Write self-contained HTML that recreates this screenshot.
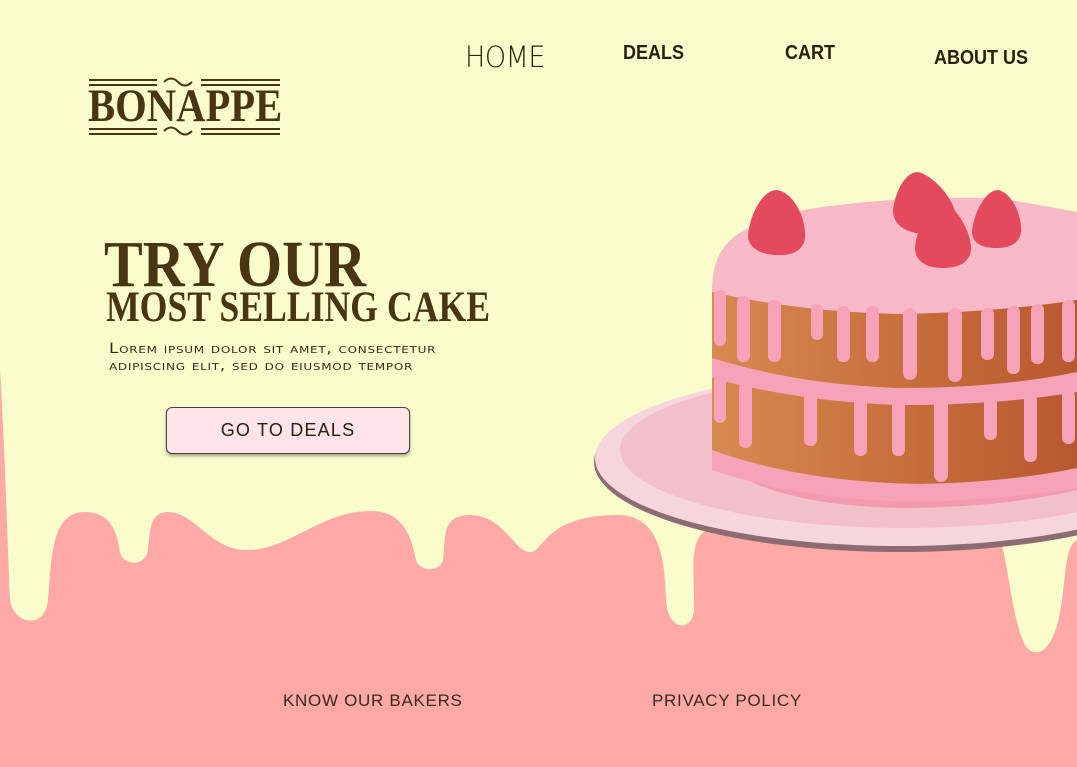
<!DOCTYPE html>
<html><head><meta charset="utf-8"><style>
*{margin:0;padding:0;box-sizing:border-box}
body{width:1077px;height:767px;overflow:hidden;background:#f9fdcc;position:relative;font-family:"Liberation Sans",sans-serif;color:#2a200f}
.a{position:absolute;white-space:nowrap}
.nav{font-family:"Liberation Sans",sans-serif;transform-origin:0 0}
.t{font-family:"Liberation Serif",serif;font-weight:bold;color:#4a3513;transform-origin:0 0}
</style></head><body>
<svg class="a" style="left:0;top:0" width="1077" height="767" viewBox="0 0 1077 767">
<defs>
<linearGradient id="sp" x1="0" x2="1"><stop offset="0" stop-color="#d88a50"/><stop offset="0.5" stop-color="#c8703e"/><stop offset="1" stop-color="#b8582e"/></linearGradient>
</defs>
<path fill="#fda9a7" d="M0,370 C5,450 8,560 10,600 C14,625 45,630 48,600 C52,560 50,512 85,512 C115,512 118,540 120,552 C122,565 145,568 148,550 C150,530 150,512 168,512 C195,512 210,550 247,550 C290,550 320,511 371,511 C405,511 412,540 416,560 C420,572 440,572 443,560 C446,540 440,515 470,515 C505,515 515,555 532,552 C545,548 548,515 618,515 C660,515 665,560 666,600 C668,632 692,632 694,610 C695,570 685,527 720,527 L1000,540 C1008,560 1012,620 1025,645 C1035,660 1055,655 1062,600 C1066,570 1066,545 1077,540 L1077,767 L0,767 Z"/>
<ellipse cx="900" cy="462" rx="306" ry="90" fill="#8d6b72"/>
<ellipse cx="900" cy="458" rx="305" ry="88" fill="#f6d6dc"/>
<ellipse cx="905" cy="450" rx="285" ry="78" fill="#f2c0cb"/>
<path fill="#f39ab0" d="M712,455 Q760,505 900,508 Q1000,508 1077,490 L1077,470 L712,440Z"/>
<path fill="url(#sp)" d="M712,365 Q800,392 900,392 Q1000,392 1077,380 L1077,475 Q1000,490 900,490 Q790,488 712,460Z"/>
<path fill="url(#sp)" d="M712,290 Q800,310 900,310 Q1000,310 1077,298 L1077,380 Q1000,392 900,392 Q800,390 712,365Z"/>
<path fill="#f6a2b8" d="M712,358 Q800,385 900,388 Q1000,388 1077,372 L1077,392 Q1000,405 900,405 Q800,402 712,378Z"/>
<path fill="#f6a2b8" d="M712,450 Q800,482 920,484 Q1010,482 1077,468 L1077,488 Q1000,500 920,502 Q800,500 712,470Z"/>
<path fill="#f7b8c8" d="M712,292 C712,240 740,230 780,215 C820,205 900,196 1000,198 L1077,212 L1077,300 Q1000,312 900,314 Q800,312 712,292Z"/>
<g fill="#f6a2b8">
<rect x="714" y="290" width="12" height="56" rx="6"/><rect x="737" y="296" width="13" height="66" rx="6"/><rect x="768" y="300" width="13" height="62" rx="6"/><rect x="811" y="304" width="12" height="36" rx="6"/><rect x="837" y="306" width="13" height="56" rx="6"/><rect x="866" y="306" width="13" height="56" rx="6"/><rect x="903" y="308" width="14" height="72" rx="7"/><rect x="948" y="308" width="14" height="74" rx="7"/><rect x="981" y="308" width="13" height="52" rx="6"/><rect x="1007" y="306" width="13" height="68" rx="6"/><rect x="1031" y="304" width="13" height="60" rx="6"/><rect x="1062" y="300" width="13" height="62" rx="6"/>
<rect x="714" y="375" width="12" height="48" rx="6"/><rect x="739" y="382" width="13" height="66" rx="6"/><rect x="804" y="390" width="13" height="56" rx="6"/><rect x="854" y="394" width="13" height="62" rx="6"/><rect x="892" y="396" width="13" height="60" rx="6"/><rect x="934" y="396" width="14" height="86" rx="7"/><rect x="984" y="396" width="13" height="44" rx="6"/><rect x="1024" y="394" width="13" height="68" rx="6"/><rect x="1062" y="390" width="13" height="54" rx="6"/>
</g>
<g fill="#e44a5e">
<path d="M777,190 C792,192 806,215 805,238 C803,252 790,256 775,255 C760,254 748,248 748,235 C750,215 762,190 777,190Z"/>
<path d="M918,172 C932,175 955,198 956,218 C954,232 940,236 922,234 C905,232 893,225 893,210 C895,192 905,172 918,172Z"/>
<path d="M943,202 C955,205 972,232 971,250 C969,265 955,268 942,268 C928,268 915,262 915,248 C916,230 930,202 943,202Z"/>
<path d="M998,190 C1010,192 1022,212 1021,232 C1019,246 1006,248 996,248 C984,248 972,244 972,232 C973,215 985,190 998,190Z"/>
</g>
<g stroke="#4a3513" stroke-width="2" fill="none">
<path d="M89,80H157M89,85H157M201,80H280M201,85H280M89,129H157M89,134H157M201,129H280M201,134H280"/>
<path d="M164,82 q7,-7 14,0 t14,0 M164,131 q7,-7 14,0 t14,0"/>
</g>
</svg>
<div class="a t" style="left:88px;top:83px;font-size:47px;transform:scaleX(0.865);line-height:47px">BONAPPE</div>
<div class="a nav" style="left:465px;top:40px;font-size:29px;font-family:'DejaVu Sans',sans-serif;font-weight:200;letter-spacing:-0.5px;transform:scaleX(0.93)">HOME</div>
<div class="a nav" style="left:623px;top:42px;font-size:20px;font-weight:bold;transform:scaleX(0.9)">DEALS</div>
<div class="a nav" style="left:785px;top:42px;font-size:20px;font-weight:bold;transform:scaleX(0.9)">CART</div>
<div class="a nav" style="left:934px;top:47px;font-size:20px;font-weight:bold;transform:scaleX(0.9)">ABOUT US</div>
<div class="a t" style="left:104px;top:232px;font-size:66px;line-height:66px;transform:scaleX(0.88)">TRY OUR</div>
<div class="a t" style="left:106px;top:286px;font-size:43px;line-height:43px;transform:scaleX(0.83)">MOST SELLING CAKE</div>
<div class="a" style="left:109px;top:341px;font-size:14px;line-height:17px;font-variant:small-caps;letter-spacing:0.6px;color:#3a2a1a;font-family:'DejaVu Sans',sans-serif;transform:scaleX(1.2);transform-origin:0 0">Lorem ipsum dolor sit amet, consectetur<br>adipiscing elit, sed do eiusmod tempor</div>
<div class="a" style="left:166px;top:407px;width:244px;height:47px;background:#fde4ea;border:1px solid #4a4040;border-radius:6px;box-shadow:0 2px 3px rgba(0,0,0,.35);text-align:center;line-height:45px;font-size:18px;letter-spacing:1.2px;color:#2a200f">GO TO DEALS</div>
<div class="a" style="left:283px;top:691px;font-size:17px;letter-spacing:0.7px;color:#3a2a1a">KNOW OUR BAKERS</div>
<div class="a" style="left:652px;top:691px;font-size:17px;letter-spacing:0.7px;color:#3a2a1a">PRIVACY POLICY</div>
</body></html>
